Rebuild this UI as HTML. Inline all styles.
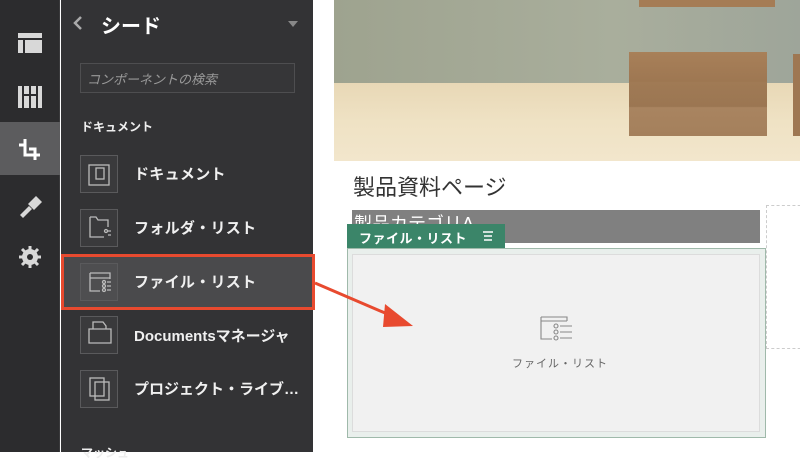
<!DOCTYPE html>
<html><head><meta charset="utf-8"><style>
*{margin:0;padding:0;box-sizing:border-box}
body{width:800px;height:452px;overflow:hidden;background:#fff;position:relative;font-family:"Liberation Sans","Noto Sans CJK JP",sans-serif}
.abs{position:absolute}
.rail{left:0;top:0;width:60px;height:452px;background:#2c2c2e;border-right:1px solid #3a3a3c}
.panel{left:61px;top:0;width:252px;height:452px;background:#333335}
.ib{position:absolute;left:80px;width:38px;height:38px;border:1px solid #5a5a5c;background:#3a3a3c}
.it{position:absolute;left:134px;color:#f0f0f0;font-size:15px;font-weight:bold;letter-spacing:0.3px;white-space:nowrap}
</style></head><body>
<div class="abs rail"></div>
<div class="abs" style="left:0;top:122px;width:60px;height:53px;background:#5c5c5e"></div>
<svg class="abs" style="left:0;top:0" width="60" height="300">
<g fill="#d8d8d8">
<rect x="18" y="33" width="24" height="5"/><rect x="18" y="40" width="5" height="13"/><rect x="25" y="40" width="17" height="13"/>
<rect x="18" y="86" width="4" height="22"/><rect x="24" y="86" width="5" height="22"/><rect x="31" y="86" width="5" height="22"/><rect x="38" y="86" width="4" height="22"/>
</g>
<rect x="22" y="94" width="16" height="2" fill="#2c2c2e"/>
<path d="M19 145 H25 V155 H40 M25 139 V145 M35 160 V149 H29" stroke="#fff" stroke-width="3" fill="none"/>
<path d="M20 215 L29 206 L32 209 L23 218 Z" fill="#d8d8d8"/>
<path d="M28 204 L36 196 L42 202 L34 210 Z" fill="#d8d8d8"/>
<circle cx="30" cy="257" r="8" fill="#d8d8d8"/>
<g stroke="#d8d8d8" stroke-width="3"><line x1="30" y1="246" x2="30" y2="268"/><line x1="19" y1="257" x2="41" y2="257"/><line x1="22" y1="249" x2="38" y2="265"/><line x1="38" y1="249" x2="22" y2="265"/></g>
<circle cx="30" cy="257" r="3" fill="#2c2c2e"/>
</svg>
<div class="abs panel"></div>
<svg class="abs" style="left:72px;top:15px" width="14" height="16"><path d="M9 2 L3 8 L9 14" stroke="#aaa" stroke-width="2.5" fill="none"/></svg>
<div class="abs" style="left:101px;top:10px;color:#fff;font-size:20px;font-weight:bold">シード</div>
<div class="abs" style="left:288px;top:21px;width:0;height:0;border-left:5px solid transparent;border-right:5px solid transparent;border-top:6px solid #888"></div>
<div class="abs" style="left:80px;top:63px;width:215px;height:30px;border:1px solid #4e4e50;background:#363638;color:#999;font-size:13px;font-style:italic;padding:5px 6px">コンポーネントの検索</div>
<div class="abs" style="left:81px;top:118px;color:#eee;font-size:12px;font-weight:bold">ドキュメント</div>
<div class="abs" style="left:61px;top:254px;width:254px;height:56px;background:#4a4a4c;border:3px solid #e84a2f"></div>
<div class="ib" style="top:155px"></div><div class="it" style="top:163px">ドキュメント</div>
<div class="ib" style="top:209px"></div><div class="it" style="top:217px">フォルダ・リスト</div>
<div class="ib" style="top:263px;background:#4e4e50"></div><div class="it" style="top:271px">ファイル・リスト</div>
<div class="ib" style="top:316px"></div><div class="it" style="top:325px;letter-spacing:0">Documentsマネージャ</div>
<div class="ib" style="top:370px"></div><div class="it" style="top:378px;width:179px;overflow:hidden;text-overflow:ellipsis;letter-spacing:0">プロジェクト・ライブラリー</div>
<div class="abs" style="left:81px;top:444px;color:#eee;font-size:12px;font-weight:bold">マッシュ</div>
<svg class="abs" style="left:80px;top:155px" width="40" height="260" fill="none" stroke="#bbb" stroke-width="1.3">
<rect x="9" y="10" width="20" height="20"/><rect x="16" y="13" width="8" height="11"/>
<path d="M10 62 V82 H24 M10 62 H16 L18 65 H28 V72"/><circle cx="26" cy="76" r="1.5"/><path d="M28 76 H31 M28 80 H31"/>
<path d="M10 118 H30 V124 M10 118 V136 H20 M10 123 H30"/><circle cx="24" cy="127" r="1.5"/><circle cx="24" cy="131" r="1.5"/><circle cx="24" cy="135" r="1.5"/><path d="M27 127 H31 M27 131 H31 M27 135 H31"/>
<path d="M9 174 H31 V188 H9 Z M13 174 V167 H23 L26 171 V174"/>
<rect x="10" y="223" width="14" height="18"/><rect x="15" y="227" width="14" height="18"/>
</svg>
<div class="abs" style="left:334px;top:0;width:466px;height:83px;background:linear-gradient(90deg,#9ea38f,#a9ae9c 60%,#9ea59a)"></div>
<div class="abs" style="left:334px;top:83px;width:466px;height:78px;background:linear-gradient(180deg,#e8d8b6,#efe2c4 50%,#f2e6cc)"></div>
<div class="abs" style="left:639px;top:0;width:136px;height:7px;background:#a57c55"></div>
<div class="abs" style="left:629px;top:52px;width:138px;height:84px;background:linear-gradient(180deg,#a88059,#9e7752 35%,#a07a55 36%,#9b7652 65%,#a98460 66%,#a4805c)"></div>
<div class="abs" style="left:793px;top:54px;width:7px;height:82px;background:#9e7752"></div>
<div class="abs" style="left:353px;top:170px;font-size:22px;color:#333">製品資料ページ</div>
<div class="abs" style="left:352px;top:210px;width:408px;height:33px;background:#808080;color:#fff;font-size:18px;padding:0 0 0 2px;overflow:hidden;line-height:28px">製品カテゴリA</div>
<div class="abs" style="left:766px;top:205px;width:40px;height:144px;border:1px dashed #ccc"></div>
<div class="abs" style="left:347px;top:248px;width:419px;height:190px;border:1px solid #9fb9aa;background:#e9efec"></div>
<div class="abs" style="left:352px;top:254px;width:408px;height:178px;border:1px solid #dcdcdc;background:#f1f1f1"></div>
<div class="abs" style="left:347px;top:224px;width:158px;height:24px;background:#3b8569;color:#fff;font-size:13px;font-weight:bold;padding:4px 0 0 12px;letter-spacing:0.5px">ファイル・リスト</div>
<svg class="abs" style="left:482px;top:230px" width="12" height="12" stroke="#fff" stroke-width="1.6"><path d="M1 2 H11 M2 6 H10 M2 10 H10"/></svg>
<svg class="abs" style="left:540px;top:315px" width="34" height="30" fill="none" stroke="#888" stroke-width="1.1">
<path d="M1 2 H27 V6 M1 2 V24 H12 M1 6 H27"/><circle cx="16" cy="11" r="2"/><circle cx="16" cy="17" r="2"/><circle cx="16" cy="23" r="2"/><path d="M20 11 H32 M20 17 H32 M20 23 H32"/>
</svg>
<div class="abs" style="left:512px;top:355px;font-size:11px;color:#666;letter-spacing:1px">ファイル・リスト</div>
<svg class="abs" style="left:0;top:0" width="800" height="452"><line x1="315" y1="283" x2="392" y2="316" stroke="#e84a2f" stroke-width="3"/><path d="M385 304 L413 326 L383 327 Z" fill="#e84a2f"/></svg>
</body></html>
